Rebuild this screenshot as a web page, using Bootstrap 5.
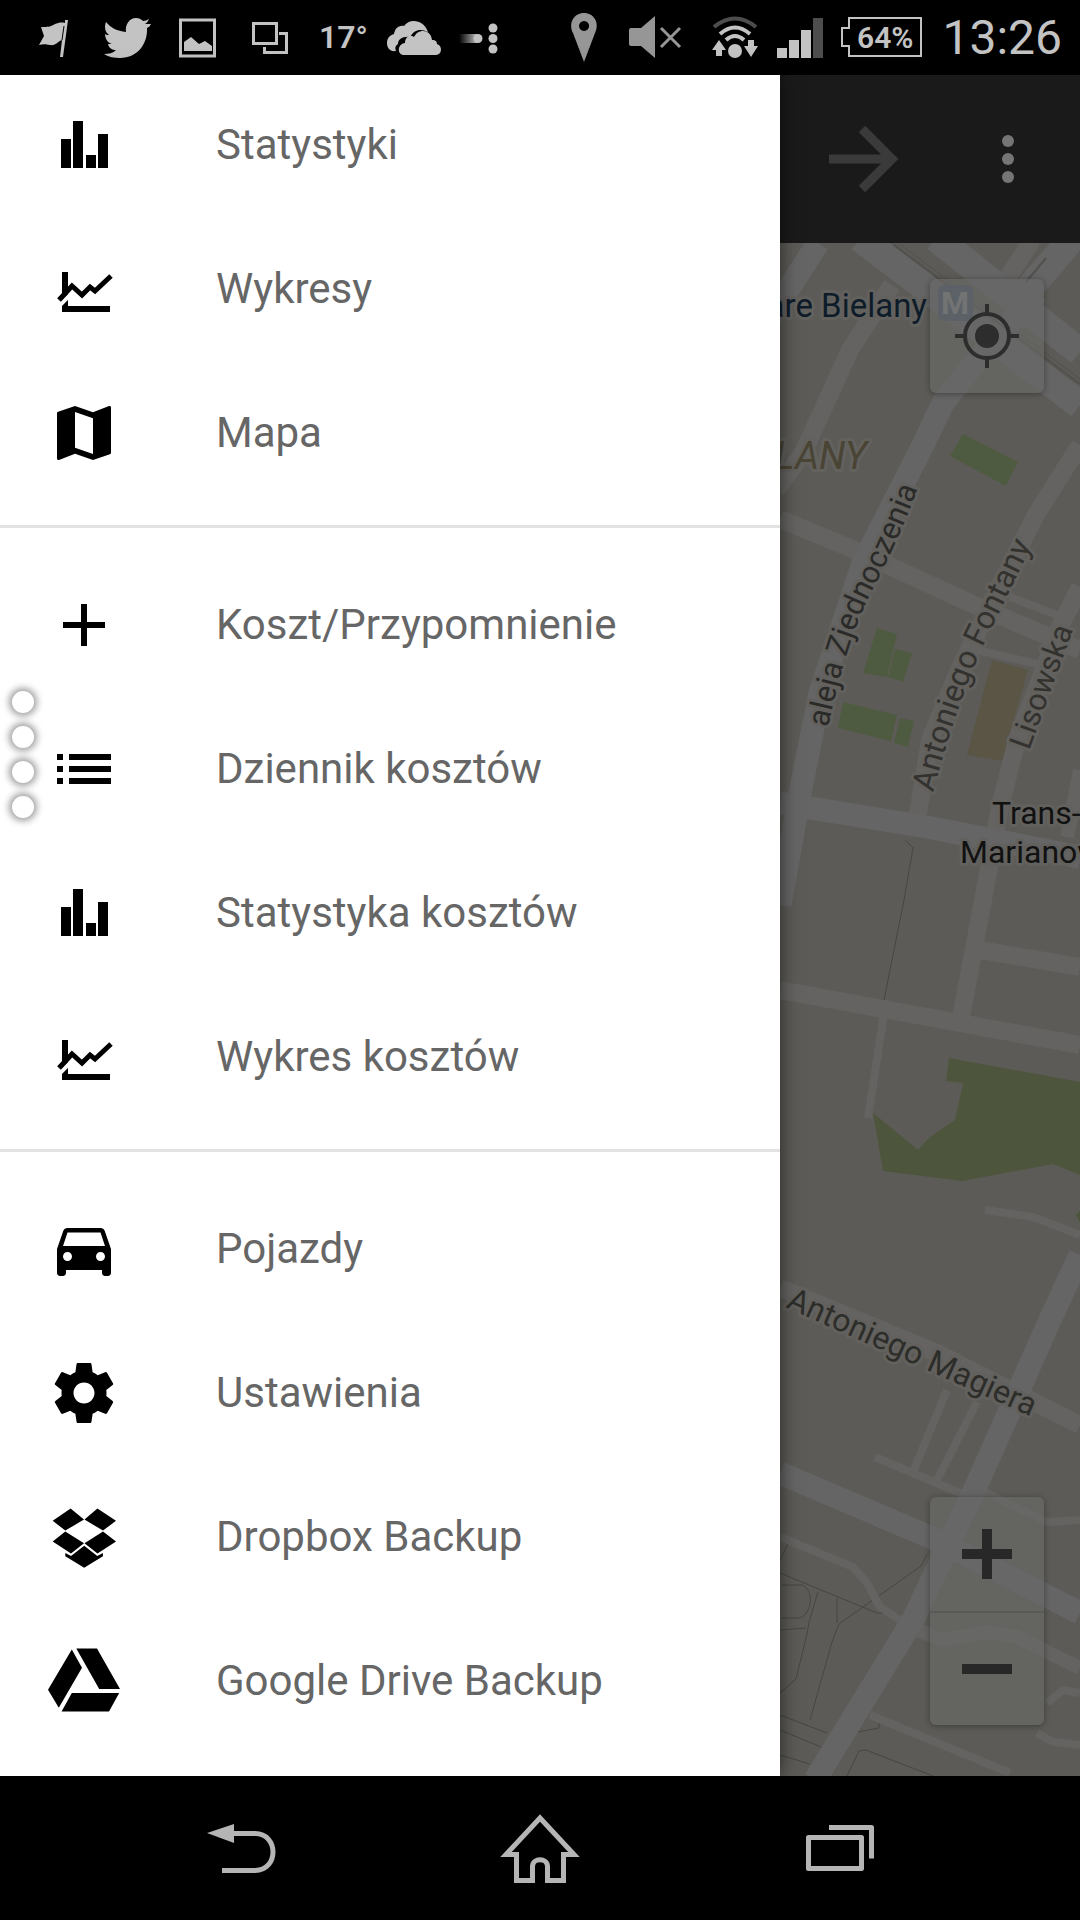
<!DOCTYPE html>
<html lang="pl">
<head>
<meta charset="utf-8">
<meta name="viewport" content="width=device-width, initial-scale=1">
<title>Mapa</title>
<link href="https://cdn.jsdelivr.net/npm/bootstrap@5.3.0/dist/css/bootstrap.min.css" rel="stylesheet">
<style>
  body { font-family: Roboto, "Noto Sans", sans-serif; background: #000; }
  .screen { height: 100vh; }
  .status-bar { height: 75px; background: #000; color: #c3c3c3; padding: 0 18px; }
  .status-icon { width: 72px; height: 75px; flex: none; fill: #c3c3c3; }
  .battery-icon { width: 92px; }
  .status-temp { font-size: 32px; font-weight: 600; width: 72px; line-height: 75px; padding-left: 13px; }
  .clock { font-size: 48px; line-height: 75px; padding-left: 14px; }
  .svg-label { font-family: Roboto, "Noto Sans", sans-serif; }
  .stage { min-height: 0; }
  .drawer { flex: 13 1 0; min-width: 0; box-shadow: 0 0 18px rgba(0, 0, 0, .6); z-index: 2; padding-bottom: 23px; }
  .drawer-list { overflow: hidden; }
  .drawer-link { height: 144px; flex: none; padding-left: 48px; gap: 96px; color: #666; font-size: 42px; line-height: 48px; text-decoration: none; white-space: nowrap; }
  .drawer-link svg { width: 72px; height: 72px; flex: none; fill: #000; }
  .drawer-rule { height: 3px; flex: none; margin: 20px 0 25px; background: #e2e2e2; opacity: 1; border: 0; }
  .edge-handle { left: 12px; top: 616px; gap: 13px; }
  .edge-handle span { width: 22px; height: 22px; border-radius: 50%; background: #fff; box-shadow: 0 0 7px 3px rgba(0, 0, 0, .38); }
  .map-pane { flex: 5 1 0; min-width: 0; }
  .app-bar { height: 168px; background: #1a1a1a; }
  .app-bar .btn { width: 144px; height: 144px; }
  .map-view { min-height: 0; background: #5d5b57; }
  .map-tool { width: 114px; height: 114px; background: rgba(104, 104, 103, .66); border: 0; }
  .map-box { right: 36px; border-radius: 6px; box-shadow: 0 1px 6px rgba(0, 0, 0, .35); overflow: hidden; }
  .map-locate { top: 36px; }
  .map-zoom { bottom: 51px; }
  .map-zoom .map-tool + .map-tool { border-top: 2px solid #595957; }
  .nav-keys { height: 144px; padding: 0 90px; background: #000; }
</style>
</head>
<body>
<div class="screen d-flex flex-column overflow-hidden">
  <header class="status-bar d-flex align-items-center justify-content-between">
    <div class="d-flex">
      <svg class="status-icon" viewBox="18 0 72 75"><path d="M65 20h3l-5 37h-3l2-17c-4 1-6 6-12 5-5-1-7-1-11 0l5-9-3-9c7 0 9 0 14-3 3-1 6-2 10-1z"/><path d="M64 26l-2 14" stroke="#000" stroke-width="1"/></svg>
      <svg class="status-icon" viewBox="90 0 72 75"><path d="M151 24c-1 2-2 3-4 4 1 15-9 30-27 30-6 0-11-1-16-4 5 0 9-1 12-4-4 0-7-2-8-6h4c-4-1-7-5-7-10 1 1 3 1 4 1-4-3-5-8-3-13 5 6 11 9 20 10-1-7 3-14 10-14 3 0 5 1 7 3 2 0 4-1 6-2-1 2-2 4-4 5 2 0 4 0 6 0z"/></svg>
      <svg class="status-icon" viewBox="162 0 72 75"><path d="M180.500 20h34v36h-34z" fill="none" stroke="#c3c3c3" stroke-width="3"/><path d="M184 51v-9l7-5 8 7 6-3 7 5v5z"/></svg>
      <svg class="status-icon" viewBox="234 0 72 75"><path d="M253.500 23.500h23v20h-23zM279 33.500h7.500v19h-22V47" fill="none" stroke="#c3c3c3" stroke-width="3"/></svg>
      <span class="status-temp">17°</span>
      <svg class="status-icon" viewBox="378 0 72 75"><path d="M396 51c-6 1-9-3-9-8s3-8 7-9c1-5 4-9 10-8 5-8 20-7 24 6-8-4-14-2-18 5-7-1-12 2-12 7-3 2-3 4-2 7z"/><path d="M404 55c-7 0-7-11 1-12 0-6 5-9 9-6 4-9 17-8 18 3 4 0 5 2 5 4 6 2 5 11-1 11z"/></svg>
      <svg class="status-icon" viewBox="450 0 72 75"><defs><linearGradient id="trail"><stop offset="0" stop-color="#c3c3c3" stop-opacity="0"/><stop offset="1" stop-color="#c3c3c3"/></linearGradient></defs><path d="M459 34h19v9h-19z" fill="url(#trail)"/><circle cx="478" cy="38.500" r="4.500"/><circle cx="493" cy="28" r="4.500"/><circle cx="493" cy="38.500" r="4.500"/><circle cx="493" cy="49" r="4.500"/></svg>
    </div>
    <div class="d-flex align-items-center">
      <svg class="status-icon" viewBox="548 0 72 75"><path fill="#969696" fill-rule="evenodd" d="M584 62l-11-29c-5-10 1-20 11-20s16 10 11 20zM584 21a5 5 0 1 0 .1 0z"/></svg>
      <svg class="status-icon" viewBox="620 0 72 75"><path fill="#969696" d="M629 30q0-2 2-2h10l14-12v42l-14-12h-10q-2 0-2-2z"/><path d="M661 28l19 19m0-19l-19 19" stroke="#969696" stroke-width="3"/></svg>
      <svg class="status-icon" viewBox="692 0 72 75"><g fill="none" stroke="#c3c3c3" stroke-width="4"><path d="M714 27q21-17 42 0" stroke="#4d4d4d"/><path d="M720 34q15-13 30 0"/><path d="M726 40q9-8 18 0"/></g><circle cx="735" cy="51" r="7"/><path d="M712 50l7-10 7 10h-4v6h-6v-6zM744 46h4v-6h6v6h4l-7 11z"/></svg>
      <svg class="status-icon" viewBox="764 0 72 75"><path d="M777 48h10v10h-10zM789 40h10v18h-10zM801 30h10v28h-10z"/><path fill="#4d4d4d" d="M813 18h10v40h-10z"/></svg>
      <svg class="status-icon battery-icon" viewBox="836 0 92 75"><path d="M849 18h72v38h-72v-10h-7V28h7z" fill="none" stroke="#c3c3c3" stroke-width="2"/><text class="svg-label" x="857" y="48" font-size="30" font-weight="600">64%</text></svg>
      <time class="clock">13:26</time>
    </div>
  </header>

  <main class="stage d-flex flex-grow-1">
    <nav class="drawer bg-white position-relative d-flex flex-column" aria-label="Menu">
      <div class="drawer-list d-flex flex-column justify-content-end flex-grow-1">
        <a href="#" class="drawer-link d-flex align-items-center"><svg viewBox="0 0 72 72"><path id="bars" d="M13 30h10v29H13zM25 12h10v47H25zM38 46h10v13H38zM50 25h10v34H50z"/></svg>Statystyki</a>
        <a href="#" class="drawer-link d-flex align-items-center"><svg viewBox="0 0 72 72"><g id="trend"><path d="M14 19h6v34h42v6H14z"/><path d="M10 54l12-12" stroke="#fff" stroke-width="4"/><path d="M11 47l13-14 10 9 8-8 5 4 16-15" fill="none" stroke="#000" stroke-width="5"/></g></svg>Wykresy</a>
        <a href="#" class="drawer-link d-flex align-items-center"><svg viewBox="0 0 24 24"><path d="M20.500 3l-.16.03L15 5.100 9 3 3.360 4.900c-.21.07-.36.25-.36.48V20.500c0 .28.22.5.5.5l.16-.03L9 18.900l6 2.100 5.640-1.900c.21-.07.36-.25.36-.48V3.500c0-.28-.22-.5-.5-.5zM15 19l-6-2.110V5l6 2.110V19z"/></svg>Mapa</a>
        <hr class="drawer-rule">
        <a href="#" class="drawer-link d-flex align-items-center"><svg viewBox="0 0 24 24"><path d="M19 13h-6v6h-2v-6H5v-2h6V5h2v6h6v2z"/></svg>Koszt/Przypomnienie</a>
        <a href="#" class="drawer-link d-flex align-items-center"><svg viewBox="0 0 24 24"><path d="M3 13h2v-2H3v2zm0 4h2v-2H3v2zm0-8h2V7H3v2zm4 4h14v-2H7v2zm0 4h14v-2H7v2zM7 7v2h14V7H7z"/></svg>Dziennik kosztów</a>
        <a href="#" class="drawer-link d-flex align-items-center"><svg viewBox="0 0 72 72"><use href="#bars"/></svg>Statystyka kosztów</a>
        <a href="#" class="drawer-link d-flex align-items-center"><svg viewBox="0 0 72 72"><use href="#trend"/></svg>Wykres kosztów</a>
        <hr class="drawer-rule">
        <a href="#" class="drawer-link d-flex align-items-center"><svg viewBox="0 0 24 24"><path d="M18.920 6.010C18.720 5.420 18.160 5 17.500 5h-11c-.66 0-1.210.42-1.420 1.010L3 12v8c0 .55.45 1 1 1h1c.55 0 1-.45 1-1v-1h12v1c0 .55.45 1 1 1h1c.55 0 1-.45 1-1v-8l-2.080-5.990zM6.500 16c-.83 0-1.500-.67-1.500-1.500S5.670 13 6.500 13s1.500.67 1.500 1.500S7.330 16 6.500 16zm11 0c-.83 0-1.500-.67-1.500-1.500s.67-1.500 1.500-1.500 1.500.67 1.500 1.500-.67 1.500-1.500 1.500zM5 11l1.500-4.500h11L19 11H5z"/></svg>Pojazdy</a>
        <a href="#" class="drawer-link d-flex align-items-center"><svg viewBox="0 0 24 24"><path d="M19.430 12.980c.04-.32.07-.64.07-.98s-.03-.66-.07-.98l2.110-1.650c.19-.15.24-.42.12-.64l-2-3.460c-.12-.22-.39-.3-.61-.22l-2.490 1c-.52-.4-1.080-.73-1.690-.98l-.38-2.650C14.460 2.180 14.250 2 14 2h-4c-.25 0-.46.18-.49.42l-.38 2.650c-.61.25-1.170.59-1.690.98l-2.490-1c-.23-.09-.49 0-.61.22l-2 3.460c-.13.22-.07.49.12.64l2.110 1.650c-.04.32-.07.65-.07.98s.03.66.07.98l-2.110 1.650c-.19.15-.24.42-.12.64l2 3.460c.12.22.39.3.61.22l2.490-1c.52.4 1.080.73 1.690.98l.38 2.650c.03.24.24.42.49.42h4c.25 0 .46-.18.49-.42l.38-2.650c.61-.25 1.170-.59 1.690-.98l2.490 1c.23.09.49 0 .61-.22l2-3.460c.12-.22.07-.49-.12-.64l-2.110-1.650zM12 15.500c-1.930 0-3.500-1.570-3.500-3.500s1.570-3.500 3.500-3.500 3.500 1.570 3.500 3.500-1.570 3.500-3.500 3.500z"/></svg>Ustawienia</a>
        <a href="#" class="drawer-link d-flex align-items-center"><svg viewBox="0 0 72 72"><path d="M22.600 7.600L36 18.600 17.300 29.600 4.700 19.800zM49.400 7.600L68 19.800 55 29.600 36.500 18.600zM17.300 30.400L36 42.300 23 52.500 4.700 40.600zM55 30.400L68 40.600 49.500 52.500 36.500 42.300zM36.200 44.700L49.300 55l5.600-2.900v3.200L36.200 66.800 17.300 55.300v-3.200L23 55z"/></svg>Dropbox Backup</a>
        <a href="#" class="drawer-link d-flex align-items-center"><svg viewBox="0 0 72 72"><path d="M23.800 4.400L34 22.800 10.800 62.800 0 44.800zM28.300 3.600H49L72 44H51.200zM23.800 48.100H71.200L61 66.400H13.600z"/></svg>Google Drive Backup</a>
      </div>
      <div class="edge-handle position-absolute d-flex flex-column"><span></span><span></span><span></span><span></span></div>
    </nav>

    <section class="map-pane d-flex flex-column">
      <div class="app-bar d-flex align-items-center justify-content-end flex-shrink-0">
        <button type="button" class="btn p-0 border-0" aria-label="Dalej"><svg width="72" height="72" viewBox="0 0 72 72" fill="none" stroke="#3a3a3a" stroke-width="9"><path d="M1 36h62M34 6l30 30-30 30"/></svg></button>
        <button type="button" class="btn p-0 border-0" aria-label="Więcej opcji"><svg width="72" height="72" viewBox="0 0 72 72" fill="#757575"><circle cx="36" cy="18" r="6"/><circle cx="36" cy="36" r="6"/><circle cx="36" cy="54" r="6"/></svg></button>
      </div>
      <div class="map-view position-relative flex-grow-1 overflow-hidden">
        <svg class="svg-label d-block w-100 h-100" viewBox="780 243 300 1533" preserveAspectRatio="xMinYMin slice">
          <defs>
            <path id="street-a" d="M828 728Q846 640 873 589T924 472"/>
            <path id="street-b" d="M933 793Q955 710 982 648L1042 524"/>
            <g id="lanes">
              <path stroke-width="8" d="M884 1013L868 1118M985 1210l48 7 47 18M780 1537l73 30 14 16 13 24 20 13M875 1457l85 36h27l60 29 33-2M947 1390l-34 82M977 1402l-40 78M870 1715l140 58M1037 1733l16 9 27 3M1047 1703l16-13 17 3M1010 597l47 18M977 650l60 14"/>
              <path stroke-width="14" d="M917 1630l26 10 44-8 30 5 63 31M1080 770l-13 67"/>
              <path stroke-width="18" d="M892 285L850 350 803 453 776 490M780 519L857 551 970 603 1080 650M1080 445L1037 513 1000 585 957 675 930 740 917 820M1080 587L1060 627 1017 740 1000 807 983 900 960 1023M780 990L1080 1045M980 950L1080 967M780 1288L937 1353 1080 1425M1000 290l32-50"/>
            </g>
            <g id="avenues">
              <path stroke-width="23" d="M818 243L770 318M1037 293L977 360 943 403 923 445 863 563 820 693 800 793 780 905M780 803L927 827 1080 857M780 1473L937 1540 1080 1613M1080 1255L1050 1320 973 1493 913 1620 815 1780"/>
              <path stroke-width="28" d="M860 238L1080 405M936 238L1080 352M1074 236L1023 296"/>
            </g>
          </defs>
          <path fill="#4f5b40" d="M963 434l55 28-12 24-56-30zM877 628l20 6-10 43-24-4zM895 649l17 4-9 29-15-5zM843 702l54 13-6 26-53-13zM900 718l14 3-6 26-14-4z"/>
          <path fill="#5a5544" d="M992 660l36 10-26 91-35-6z"/>
          <path fill="#4d553c" d="M949 1058l131 24v93l-27-11-91 17-79-10-10-58 45 37 12-13 25-17 8-37-17-2zM1076 1215l4-4v12z"/>
          <path fill="none" stroke="#474641" stroke-width="1" d="M905 840l8 8-9 52-20 100M780 1573l97 40h8M927 1554l-6 12-82 58-7 18-22 78M837 1598v25M818 1592l-9 30-2 12-11 45-16 14M782 1585h20c14 5 9 34-5 33h-15M780 1630l26-2M788 1543l-8 18M780 1715l47 18M780 1730l41 17M780 1755l30 9M847 1776l12-25 7-1 67 26M858 1732l21-4v-6"/>
          <use href="#lanes" fill="none" stroke="#646361" stroke-linejoin="round"/>
          <use href="#avenues" fill="none" stroke="#666566" stroke-linejoin="round"/>
          <g fill="none" stroke="#53514d"><path d="M894 245L1080 384" stroke-width="2"/><path d="M901 245L1080 379" stroke-width="1"/><path d="M1046 258l-20 24" stroke-width="2"/></g>
          <g stroke="#62615e" stroke-width="6" stroke-linejoin="round" paint-order="stroke">
            <text x="927" y="317" text-anchor="end" font-size="33" fill="#0e1c2a">Stare Bielany</text>
            <text x="867" y="469" text-anchor="end" font-size="38" font-style="italic" fill="#494434">BIELANY</text>
            <text font-size="31" fill="#2a2a28"><textPath href="#street-a">aleja Zjednoczenia</textPath></text>
            <text font-size="32" fill="#33322f"><textPath href="#street-b">Antoniego Fontany</textPath></text>
            <text font-size="31" fill="#33322f" transform="translate(1029 751) rotate(-70)">Lisowska</text>
            <text font-size="32" fill="#2d2d2a" transform="translate(785 1307) rotate(24)">Antoniego Magiera</text>
            <text x="992" y="824" font-size="32" fill="#111">Trans-</text>
            <text x="960" y="863" font-size="32" fill="#111">Marianow</text>
          </g>
          <rect x="938" y="285" width="35" height="36" rx="6" fill="#43536a"/>
          <text x="955" y="314" text-anchor="middle" font-size="32" font-weight="700" fill="#85888b">M</text>
        </svg>
        <div class="map-box map-locate position-absolute">
          <button type="button" class="map-tool d-block p-0" aria-label="Moja lokalizacja"><svg width="72" height="72" viewBox="0 0 72 72" fill="#2d2d2d"><circle cx="36" cy="36" r="12"/><circle cx="36" cy="36" r="22" fill="none" stroke="#2d2d2d" stroke-width="4"/><path d="M34 4h4v9h-4zM34 59h4v9h-4zM4 34h9v4H4zM59 34h9v4h-9z"/></svg></button>
        </div>
        <div class="map-box map-zoom position-absolute">
          <button type="button" class="map-tool d-block p-0" aria-label="Powiększ"><svg width="50" height="50" viewBox="0 0 50 50" fill="#282828"><path d="M20 0h10v20h20v10H30v20H20V30H0V20h20z"/></svg></button>
          <button type="button" class="map-tool d-block p-0" aria-label="Pomniejsz"><svg width="50" height="50" viewBox="0 0 50 50" fill="#282828"><path d="M0 20h50v10H0z"/></svg></button>
        </div>
      </div>
    </section>
  </main>

  <footer class="nav-keys d-flex flex-shrink-0">
    <button type="button" class="btn p-0 border-0 flex-fill" aria-label="Wstecz"><svg width="96" height="144" viewBox="192 1776 96 144"><path d="M207 1833l27-9v19z" fill="#b5b5b5"/><path d="M232 1833.500h23c24 0 24 37 0 37h-33" fill="none" stroke="#b5b5b5" stroke-width="5"/></svg></button>
    <button type="button" class="btn p-0 border-0 flex-fill" aria-label="Ekran główny"><svg width="96" height="144" viewBox="492 1776 96 144"><path d="M540 1818l-34 36.500h10.500v26h16v-14c0-9 15-9 15 0v14h16v-26H574z" fill="none" stroke="#b5b5b5" stroke-width="5"/></svg></button>
    <button type="button" class="btn p-0 border-0 flex-fill" aria-label="Ostatnie"><svg width="96" height="144" viewBox="792 1776 96 144"><path d="M808.500 1837.500h53v31h-53zM829 1827.500h42.500v31" fill="none" stroke="#b5b5b5" stroke-width="5" stroke-linejoin="round"/></svg></button>
  </footer>
</div>
<script src="https://cdn.jsdelivr.net/npm/bootstrap@5.3.0/dist/js/bootstrap.bundle.min.js"></script>
</body>
</html>
